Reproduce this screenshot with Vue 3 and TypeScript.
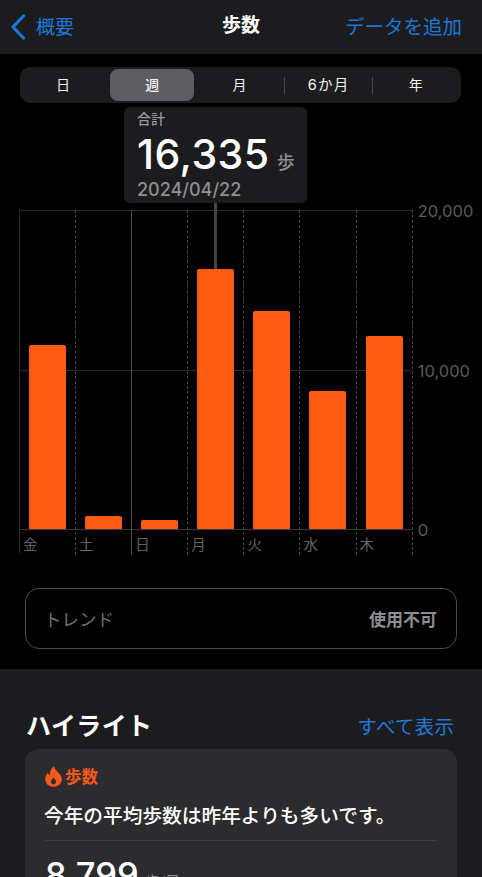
<script setup lang="ts">
const segments = [
  { label: '日', active: false, divider: false },
  { label: '週', active: true, divider: false },
  { label: '月', active: false, divider: true },
  { label: '6か月', active: false, divider: true },
  { label: '年', active: false, divider: false },
]
const days = [
  { label: '金', top: 345, solid: false },
  { label: '土', top: 516, solid: true },
  { label: '日', top: 520, solid: false },
  { label: '月', top: 269, solid: false },
  { label: '火', top: 311, solid: false },
  { label: '水', top: 391, solid: false },
  { label: '木', top: 336, solid: false },
]
const barHeight = (top: number) => `${529 - top}px`
</script>

<template>
  <div class="screen">
    <header class="nav">
      <div class="back">
        <svg class="chevron" width="16" height="26" viewBox="0 0 16 26" fill="none">
          <path d="M13.5 2 L3 13 L13.5 24" stroke="#1a78da" stroke-width="3.2" stroke-linecap="round" stroke-linejoin="round" />
        </svg>
        <span class="nav-text">概要</span>
      </div>
      <div class="title">歩数</div>
      <div class="add nav-text">データを追加</div>
    </header>

    <section class="top">
      <div class="seg">
        <div
          v-for="s in segments"
          :key="s.label"
          class="seg-item"
          :class="{ active: s.active, divider: s.divider, wide: s.label.length > 1 }"
        >{{ s.label }}</div>
      </div>

      <div class="tip">
        <div class="tip-label">合計</div>
        <div class="tip-value"><span class="num">16,335</span><span class="unit">歩</span></div>
        <div class="tip-date">2024/04/22</div>
      </div>

      <div class="chart">
        <div class="plot">
          <div class="hline h0"></div>
          <div class="hline h1"></div>
          <div class="hline h2"></div>
          <div class="leader"></div>
          <div v-for="d in days" :key="d.label" class="col" :class="{ solid: d.solid }">
            <div class="bars">
              <div class="bar" :style="{ height: barHeight(d.top) }"></div>
            </div>
            <div class="day">{{ d.label }}</div>
          </div>
        </div>
        <div class="axis">
          <span class="a0">20,000</span>
          <span class="a1">10,000</span>
          <span class="a2">0</span>
        </div>
      </div>

      <div class="trend">
        <span class="trend-l">トレンド</span>
        <span class="trend-r">使用不可</span>
      </div>
    </section>

    <section class="lower">
      <div class="hl-head">
        <h2>ハイライト</h2>
        <span class="all">すべて表示</span>
      </div>
      <div class="card">
        <div class="card-tag">
          <svg width="17" height="21" viewBox="0 0 17 21">
            <path fill-rule="evenodd" fill="#f9591a" d="M9 0.3 C9.6 3 11.2 4.6 13.2 6.6 C15.4 8.8 16.8 10.8 16.8 13.2 C16.8 17.6 13.2 20.7 8.5 20.7 C3.8 20.7 0.2 17.6 0.2 13.2 C0.2 10.4 1.2 8.2 3 6.4 C3.2 7.8 3.8 8.8 4.8 9.4 C4.8 5.8 6 2.4 9 0.3 Z M8.6 11.4 C8 12.8 5.9 13.8 5.9 15.8 C5.9 17.3 7 18.2 8.5 18.2 C10 18.2 11.1 17.3 11.1 15.8 C11.1 13.8 9.3 13 8.6 11.4 Z" />
          </svg>
          <span>歩数</span>
        </div>
        <p class="card-text">今年の平均歩数は昨年よりも多いです。</p>
        <div class="card-rule"></div>
        <div class="card-stat"><span class="stat-num">8,799</span><span class="stat-unit">歩/日</span></div>
      </div>
    </section>
  </div>
</template>

<style>
html, body { margin: 0; background: #000; }
</style>

<style scoped>
.screen {
  width: 482px;
  height: 877px;
  overflow: hidden;
  background: #000;
  color: #fff;
  font-family: Inter, "Noto Sans CJK JP", sans-serif;
}
.nav {
  height: 54px;
  background: #1c1c1e;
  display: flex;
  align-items: center;
  justify-content: space-between;
  padding: 0 20px 0 10px;
  position: relative;
  box-sizing: border-box;
}
.back {
  display: flex;
  align-items: center;
  gap: 10px;
  color: #1a78da;
  font-size: 19px;
}
.chevron { display: block; margin-top: -1px; }
.nav-text { margin-bottom: 3px; }
.title {
  position: absolute;
  left: 0;
  right: 0;
  top: 12px;
  line-height: 28px;
  text-align: center;
  font-size: 19px;
  font-weight: 700;
  pointer-events: none;
}
.add { color: #1a78da; font-size: 19.5px; }
.top {
  position: relative;
  height: 615px;
  padding-top: 13px;
  box-sizing: border-box;
}
.seg {
  margin: 0 21px 0 20px;
  height: 36px;
  padding: 2px 0;
  box-sizing: border-box;
  background: #1c1c1e;
  border-radius: 10px;
  display: grid;
  grid-template-columns: repeat(5, 88.2px);
}
.seg-item {
  position: relative;
  display: flex;
  align-items: center;
  justify-content: center;
  padding: 0 2px 3px 0;
  box-sizing: border-box;
  font-size: 14px;
  color: #f2f2f2;
  border-radius: 8px;
  margin: 0 2px;
}
.seg-item.active { background: #5e5e62; font-weight: 500; padding-right: 0; }
.seg-item.wide { letter-spacing: 1.2px; font-size: 14.5px; padding-right: 0; }
.seg-item.divider::after {
  content: "";
  position: absolute;
  right: -2.5px;
  top: 8px;
  height: 17px;
  width: 1px;
  background: #48484a;
}
.tip {
  position: absolute;
  left: 124px;
  top: 53px;
  width: 183px;
  height: 96px;
  box-sizing: border-box;
  padding: 2px 13px 0;
  background: #1c1c1e;
  border-radius: 6px;
  z-index: 3;
}
.tip-label { font-size: 14px; line-height: 20px; color: #98989d; font-weight: 500; }
.tip-value { display: flex; align-items: baseline; line-height: 50px; height: 49px; }
.num { font-size: 41px; font-weight: 500; letter-spacing: 0.5px; }
.unit { font-size: 18px; color: #8e8e93; margin-left: 7px; font-weight: 500; }
.tip-date { font-size: 18px; line-height: 24px; color: #8e8e93; font-weight: 500; }
.chart {
  margin: 107px 0 0 19px;
  display: flex;
  height: 343px;
  position: relative;
}
.plot {
  display: grid;
  grid-template-columns: repeat(7, 56.1px);
  width: 392.7px;
  height: 343px;
  position: relative;
  border-left: 1px solid #2e2e30;
}
.hline { position: absolute; left: 0; width: 392px; height: 1px; background: #2a2a2c; }
.h0 { top: 0; }
.h1 { top: 160px; }
.h2 { top: 319px; background: #3a3a3c; }
.leader {
  position: absolute;
  left: 194px;
  top: -10px;
  width: 3px;
  height: 69px;
  background: #444446;
}
.col {
  position: relative;
  border-right: 1px dashed #48484a;
  box-sizing: border-box;
  display: flex;
  flex-direction: column;
}
.col.solid { border-right: 1px solid #48484a; }
.bars {
  height: 319px;
  display: flex;
  align-items: flex-end;
  padding-left: 9px;
  position: relative;
}
.bar {
  width: 37px;
  background: #fe5a13;
  border-radius: 2px 2px 0 0;
  position: relative;
  z-index: 1;
}
.day {
  font-size: 14.5px;
  line-height: 20px;
  color: #636366;
  padding: 6px 0 0 3px;
}
.axis { position: relative; flex: 1; font-size: 16.5px; color: #5a5a5e; }
.axis span { position: absolute; left: 5px; line-height: 20px; }
.a0 { top: -9px; }
.a1 { top: 151px; }
.a2 { top: 310px; }
.trend {
  position: absolute;
  left: 25px;
  top: 534px;
  width: 432px;
  height: 61px;
  box-sizing: border-box;
  border: 1.5px solid #4c4c4e;
  border-radius: 14px;
  padding: 0 19px 0 18px;
  display: flex;
  align-items: center;
  justify-content: space-between;
}
.trend-l { font-size: 17.5px; color: #6e6e72; }
.trend-r { font-size: 17px; color: #8e8e93; font-weight: 700; }
.lower {
  background: #1c1c1e;
  padding: 38px 25px 0;
  height: 208px;
  box-sizing: border-box;
}
.hl-head {
  display: flex;
  align-items: flex-end;
  justify-content: space-between;
  height: 42px;
  padding: 0 3px 5px 1px;
  box-sizing: border-box;
}
.hl-head h2 {
  margin: 0;
  font-size: 25px;
  line-height: 36px;
  font-weight: 700;
  letter-spacing: 0.4px;
}
.all { color: #1f78d8; font-size: 19.8px; line-height: 32px; margin-bottom: 1px; }
.card {
  background: #2c2c2e;
  border-radius: 14px;
  padding: 15px 20px;
  margin-top: 0;
  height: 200px;
  box-sizing: border-box;
}
.card-tag {
  display: flex;
  align-items: center;
  gap: 3px;
  color: #f9591a;
  font-size: 16.5px;
  font-weight: 700;
  height: 24px;
}
.card-text {
  margin: 12px 0 0 -1px;
  font-size: 19.7px;
  line-height: 32px;
  font-weight: 500;
  color: #fff;
  white-space: nowrap;
}
.card-rule { height: 1px; background: #3f3f42; margin-top: 8px; }
.card-stat { display: flex; align-items: baseline; margin-top: 13px; }
.stat-num { font-size: 34.5px; font-weight: 500; }
.stat-unit { font-size: 15px; color: #8e8e93; margin-left: 6px; }
</style>
